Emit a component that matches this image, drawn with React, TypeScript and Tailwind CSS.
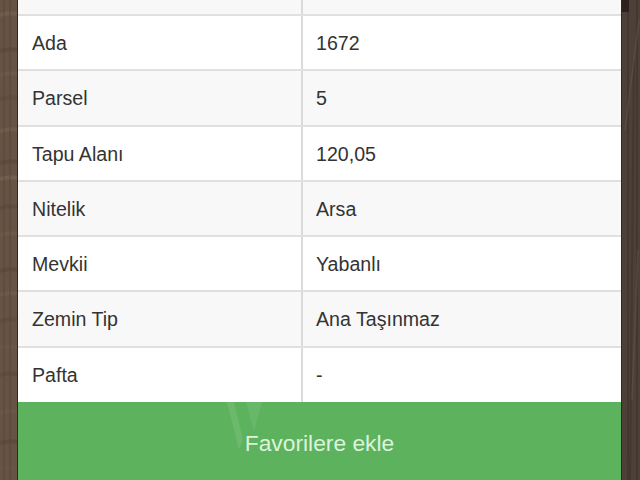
const rows = [
  { label: "", value: "", h: "h-[16px]", odd: true },
  { label: "Ada", value: "1672", h: "h-[55px]", odd: false },
  { label: "Parsel", value: "5", h: "h-[56px]", odd: true },
  { label: "Tapu Alanı", value: "120,05", h: "h-[55px]", odd: false },
  { label: "Nitelik", value: "Arsa", h: "h-[55px]", odd: true },
  { label: "Mevkii", value: "Yabanlı", h: "h-[55px]", odd: false },
  { label: "Zemin Tip", value: "Ana Taşınmaz", h: "h-[56px]", odd: true },
  { label: "Pafta", value: "-", h: "h-[54px]", odd: false },
];

const leftGrain = [
  [12, "#8a7460"], [48, "#4a3b30"], [72, "#7d6856"], [96, "#524236"], [128, "#86705c"],
  [160, "#493a2f"], [176, "#8f7a65"], [205, "#4c3d31"], [232, "#7c6754"], [268, "#4a3b30"],
  [292, "#80695a"], [318, "#4e4033"], [345, "#6f5d4e"], [372, "#4d3a34"], [410, "#75605a"],
  [440, "#473832"], [466, "#6f5a50"],
] as const;

function Wood() {
  return (
    <svg className="absolute inset-0" width="640" height="480" viewBox="0 0 640 480">
      <rect x="0" y="0" width="18" height="480" fill="#665344" />
      <rect x="621" y="0" width="19" height="480" fill="#4d4038" />
      {leftGrain.map(([y, color]) => (
        <path key={y} d={`M0 ${y + 3} Q9 ${y} 17 ${y + 2}`} stroke={color} strokeWidth="4" fill="none" opacity="0.3" />
      ))}
      <path d="M4 0V480M10 0V480" stroke="#4f3f34" strokeWidth="2" opacity="0.3" />
      <path d="M628 0V480M634 60L630 480M637 0V480" stroke="#3b302a" strokeWidth="2" opacity="0.5" />
      <path d="M625 130L639 20M632 400L638 250" stroke="#66574d" strokeWidth="1.5" opacity="0.5" />
      <rect x="621" y="0" width="8" height="12" fill="#2c211c" />
      <rect x="17" y="0" width="1" height="480" fill="#2f2825" />
      <rect x="621" y="0" width="1" height="480" fill="#2f2825" />
    </svg>
  );
}

export default function App() {
  return (
    <div className="relative h-[480px] w-[640px] overflow-hidden bg-[#54463c] pl-[18px] pr-[19px] font-['Liberation_Sans',Arial,sans-serif]">
      <Wood />
      <div className="relative flex h-full flex-col">
        {rows.map((row, index) => (
          <div
            key={index}
            className={`flex ${row.h} shrink-0 text-[19.6px] text-[#333333] ${
              index === rows.length - 1 ? "" : "border-b-2 border-[#e0e0e0]"
            } ${row.odd ? "bg-[#f8f8f8]" : "bg-white"}`}
          >
            <div className="flex w-[285px] items-center border-r-2 border-[#dadada] pl-[14px] pt-[2px]">
              {row.label}
            </div>
            <div className="flex flex-1 items-center pl-[13px] pt-[2px]">{row.value}</div>
          </div>
        ))}
        <div className="relative flex flex-1 items-center justify-center bg-[#5cb25d] pt-[4px] text-[22.8px] text-[#dcf3dc]">
          <svg className="absolute left-[208px] top-0" width="50" height="50" viewBox="0 0 50 50">
            <path d="M1 0L13 48L17 38L8 0Z" fill="#ffffff" opacity="0.1" />
            <path d="M20 0L28 30L36 0Z" fill="#ffffff" opacity="0.08" />
          </svg>
          <span className="relative">Favorilere ekle</span>
        </div>
      </div>
    </div>
  );
}
